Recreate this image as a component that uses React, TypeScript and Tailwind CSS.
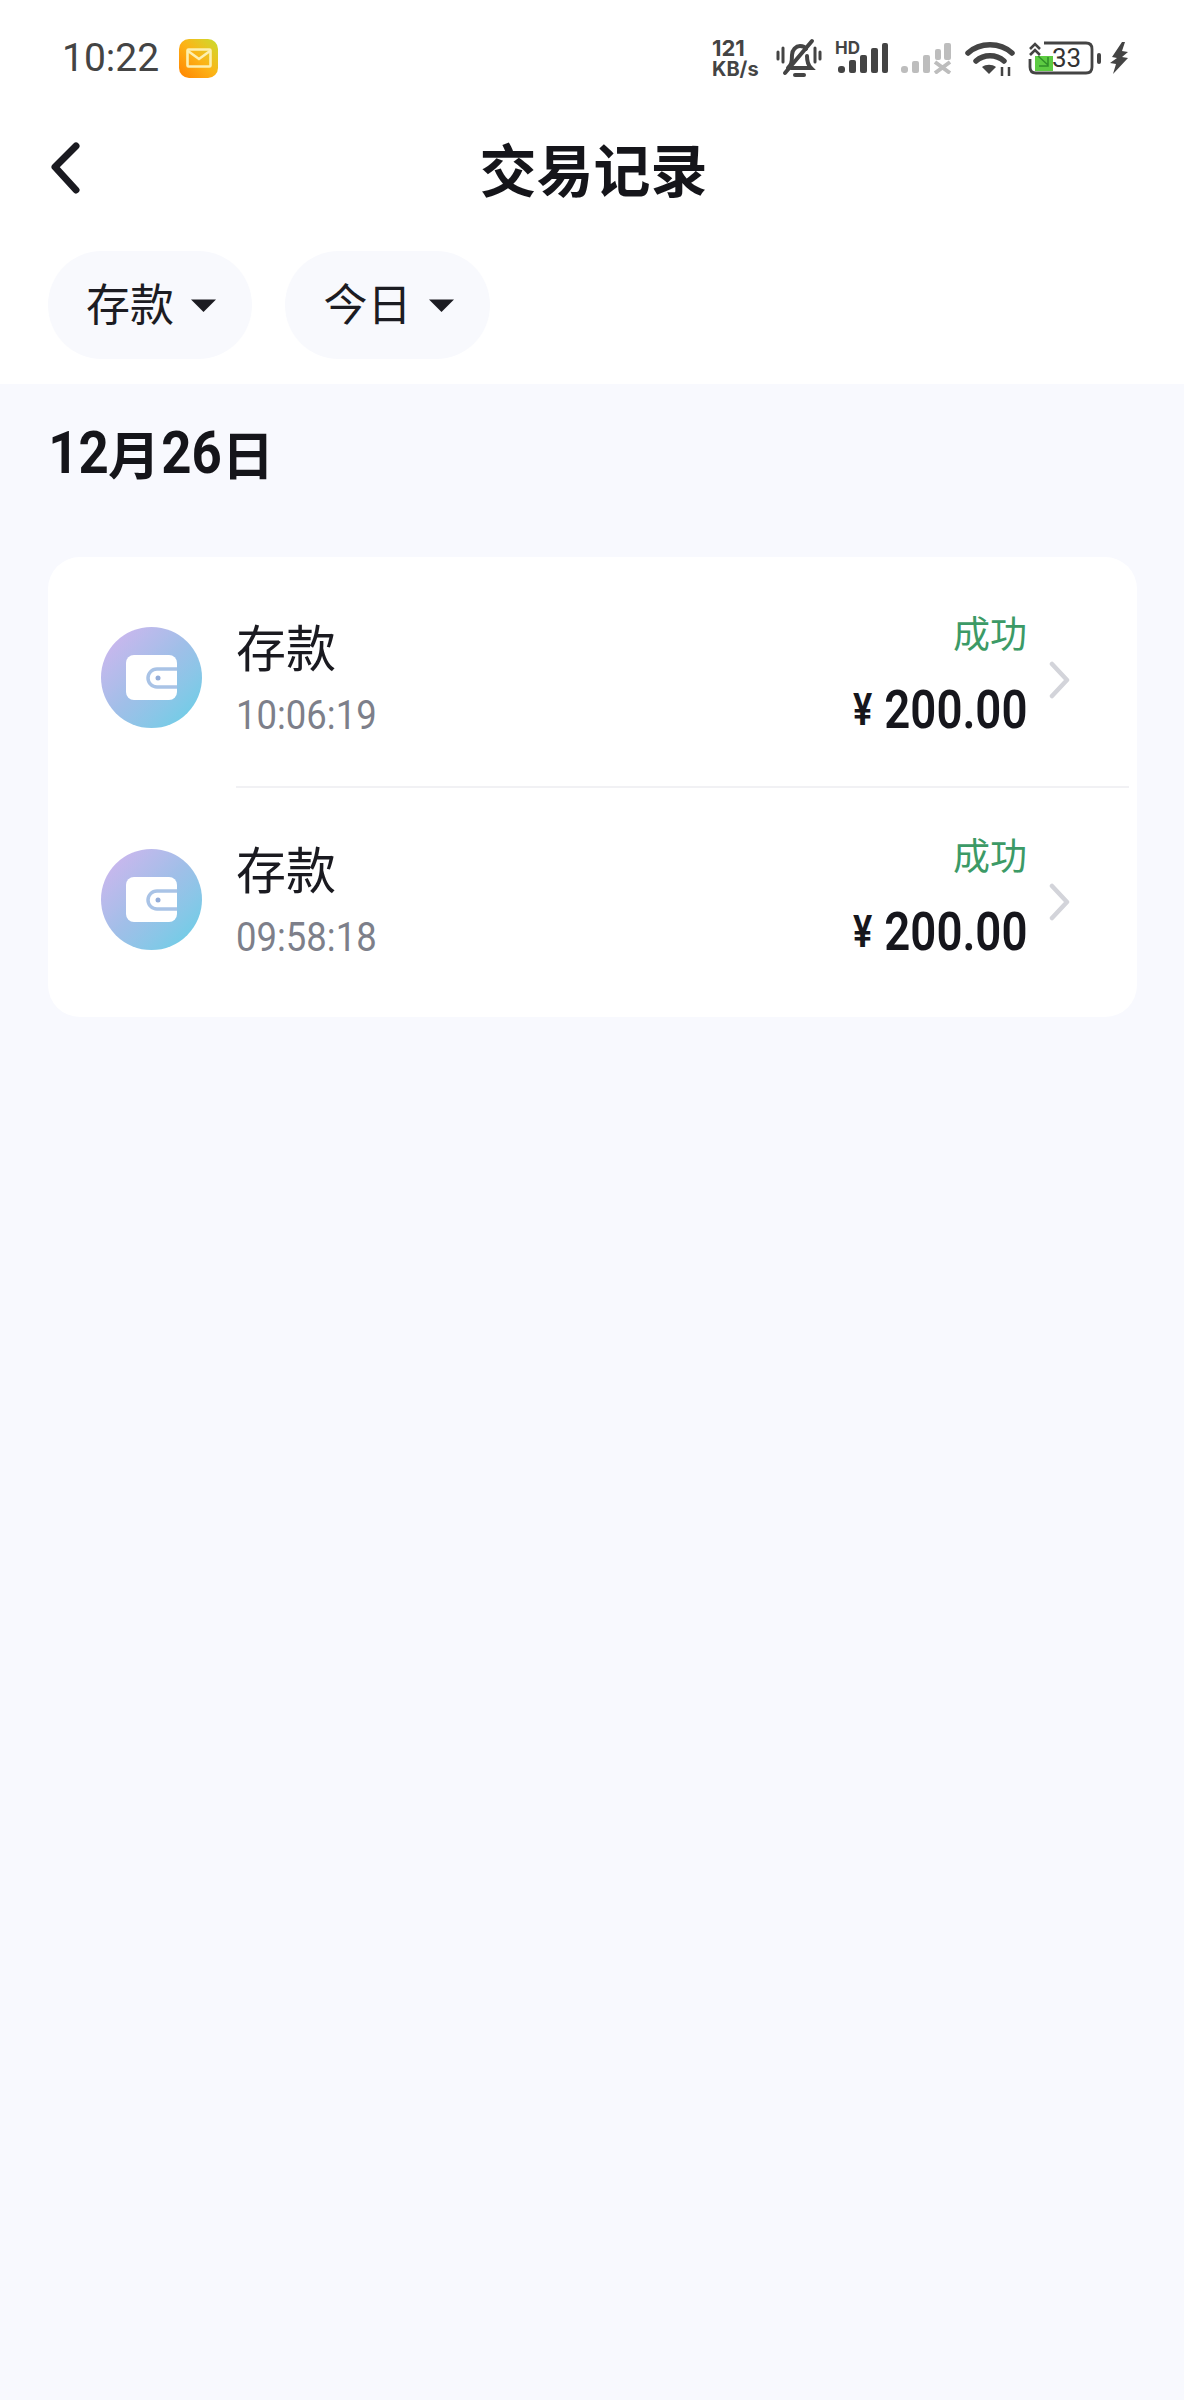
import React from 'react';

const CJK = "font-['Noto_Sans_CJK_SC','Noto_Sans',sans-serif]";

function MailIcon() {
  return (
    <div className="flex h-[39px] w-[39px] items-center justify-center rounded-[10px] bg-gradient-to-tr from-[#ff8200] via-[#fcb316] to-[#c6dc2e]">
      <svg width="26" height="20" viewBox="0 0 26 20" fill="none" stroke="#fdf0b0" strokeWidth="2.6">
        <rect x="1.500" y="1.500" width="23" height="17" rx="1" />
        <path d="M2 3l11 8 11-8" />
      </svg>
    </div>
  );
}

function StatusIcons() {
  return (
    <div className="flex items-center">
      <div className="mr-[12px] flex w-[52px] flex-col font-['Inter',sans-serif] font-bold text-[#444]">
        <span className="text-[22px] leading-[22px]">121</span>
        <span className="text-[20px] leading-[20px]">KB/s</span>
      </div>
      <svg className="mr-[13px]" width="46" height="40" viewBox="0 0 46 40" fill="none" stroke="#444" strokeWidth="4" strokeLinecap="round">
        <path d="M2 14v7M7 10v14M39 10v14M44 14v7" strokeWidth="3" />
        <path d="M12 30c3-3 4-5 4-13 0-5 4-9 8-9 3 0 5 1 6 3M31 18c0 6 1 9 4 12H15" />
        <path d="M19 37h9" />
        <path d="M9 35L36 3" />
      </svg>
      <div className="relative mr-[12px] h-[32px] w-[53px]">
        <span className="absolute left-0 top-[-3px] font-['Inter',sans-serif] text-[17px] font-bold leading-[18px] text-[#444]">HD</span>
        <svg width="53" height="32" viewBox="0 0 53 32" fill="#444">
          <rect x="3" y="24" width="7" height="7" rx="3" />
          <rect x="14" y="18" width="7" height="13" rx="2" />
          <rect x="25" y="13" width="7" height="18" rx="2" />
          <rect x="36" y="6" width="7" height="25" rx="2" />
          <rect x="47" y="1" width="6" height="30" rx="2" />
        </svg>
      </div>
      <svg className="mr-[13px]" width="52" height="32" viewBox="0 0 52 32" fill="#bdbdbd">
        <rect x="1" y="24" width="7" height="7" rx="3" />
        <rect x="12" y="19" width="7" height="12" rx="2" />
        <rect x="23" y="13" width="7" height="18" rx="2" />
        <rect x="35" y="7" width="6" height="11" rx="2" />
        <rect x="44" y="1" width="7" height="17" rx="2" />
        <path d="M35 20l15 11M50 20L35 31" stroke="#bdbdbd" strokeWidth="4" fill="none" />
      </svg>
      <svg className="mr-[13px]" width="50" height="36" viewBox="0 0 50 36" fill="none" stroke="#444" strokeWidth="5.500">
        <path d="M3 13c12-11 32-11 44 0" strokeLinecap="round" />
        <path d="M11 21c8-7 20-7 28 0" strokeLinecap="round" />
        <path d="M17 27c4-3 10-3 14 0l-7 7z" fill="#444" stroke="none" />
        <path d="M37 27v9M44 27v9" strokeWidth="2.500" />
      </svg>
      <div className="relative mr-[8px] h-[34px] w-[74px]">
        <svg width="74" height="34" viewBox="0 0 74 34" fill="none">
          <path d="M2 8l5-5 5 5M2 14l5-5 5 5" stroke="#444" strokeWidth="2.600" />
          <path d="M2 18v8c0 4 2 6 6 6h50c4 0 6-2 6-6V8c0-4-2-6-6-6H16" stroke="#444" strokeWidth="2.800" />
          <path d="M7 15h18v15H7z" fill="#5dcb42" />
          <path d="M10 15l10 9M20 16v9h-9" stroke="#2f8f28" strokeWidth="1.500" />
          <rect x="69" y="12" width="4" height="11" rx="2" fill="#444" />
        </svg>
        <span className="absolute left-[24px] top-[1px] font-['Roboto',sans-serif] text-[26px] leading-[32px] text-[#333]">33</span>
      </div>
      <svg width="18" height="32" viewBox="0 0 18 32" fill="#444">
        <path d="M12 0L2 15l5 1-7 5 6 1-3 10 15-16-6-1 6-5-6-1 3-9z" />
      </svg>
    </div>
  );
}

function Caret() {
  return (
    <svg width="25" height="13" viewBox="0 0 25 13" fill="#1c1c22">
      <path d="M0 0.500h25L12.500 13z" />
    </svg>
  );
}

function WalletBadge() {
  return (
    <div className="flex h-[101px] w-[101px] shrink-0 items-center justify-center rounded-full bg-gradient-to-br from-[#d4b4ef] via-[#9fbfe8] to-[#5fd0e6]">
      <svg width="51" height="45" viewBox="0 0 51 45">
        <rect width="51" height="45" rx="8" fill="#fff" />
        <path d="M51 14H31a8.500 8.500 0 0 0 0 18h20" fill="#fff" stroke="#a9c3e6" strokeWidth="3.500" />
        <circle cx="32" cy="23" r="2.500" fill="#93acd8" />
      </svg>
    </div>
  );
}

function Row({ time, last }: { time: string; last?: boolean }) {
  return (
    <div className={`flex h-[231px] ${last ? '-mt-[9px]' : ''}`}>
      <div className="pl-[53px] pt-[70px]">
        <WalletBadge />
      </div>
      <div className={`ml-[34px] mr-[8px] flex flex-1 ${last ? '' : 'border-b-2 border-[#f1f1f4]'}`}>
        <div className="pt-[58px]">
          <div className={`${CJK} text-[50px] leading-[60px] text-[#1a1a20]`}>存款</div>
          <div className="mt-[18px] w-[138px] origin-left scale-x-[0.89] whitespace-nowrap font-['Roboto',sans-serif] text-[41px] font-normal leading-[44px] text-[#7d7f8a]">{time}</div>
        </div>
        <div className="ml-auto flex flex-col items-end pt-[50px]">
          <div className={`${CJK} text-[37px] leading-[50px] text-[#3c9a66]`}>成功</div>
          <div className="mt-[23px] flex items-center font-['Roboto',sans-serif] font-semibold leading-[60px] text-[#16161c]">
            <span className="flex w-[32px] justify-start">
              <span className="origin-left scale-x-[0.82] text-[44px]">¥</span>
            </span>
            <span className="flex w-[142px] justify-end">
              <span className="origin-right scale-x-[0.86] whitespace-nowrap text-[53px]">200.00</span>
            </span>
          </div>
        </div>
        <div className="ml-[22px] mr-[59px] pt-[104px]">
          <svg width="21" height="38" viewBox="0 0 21 38" fill="none" stroke="#d3d4da" strokeWidth="4.500" strokeLinecap="round" strokeLinejoin="round">
            <path d="M3 3l15 16L3 35" />
          </svg>
        </div>
      </div>
    </div>
  );
}

export default function App() {
  return (
    <div className="flex min-h-[2400px] w-[1184px] flex-col bg-white">
      <div className="flex h-[116px] items-center justify-between pl-[62px] pr-[56px]">
        <div className="flex items-center">
          <span className="font-['Roboto',sans-serif] text-[39px] leading-none text-[#444]">10:22</span>
          <div className="ml-[20px]">
            <MailIcon />
          </div>
        </div>
        <StatusIcons />
      </div>

      <div className="relative flex h-[115px] items-center justify-center pb-[14px] pl-[3px]">
        <svg className="absolute left-[48px] top-[24px]" width="34" height="54" viewBox="0 0 34 54" fill="none" stroke="#1a1a20" strokeWidth="7" strokeLinecap="round" strokeLinejoin="round">
          <path d="M28 6L7 27l21 23" />
        </svg>
        <h1 className={`${CJK} text-[57px] font-bold leading-[70px] text-[#15151a]`}>交易记录</h1>
      </div>

      <div className="flex gap-[33px] px-[48px] pt-[20px]">
        <div className="flex h-[108px] w-[204px] items-center justify-center gap-[17px] rounded-full bg-[#f8f9fd] pl-[2px]">
          <span className={`${CJK} -mt-[6px] text-[44px] leading-none text-[#1c1c22]`}>存款</span>
          <Caret />
        </div>
        <div className="flex h-[108px] w-[205px] items-center justify-center gap-[17px] rounded-full bg-[#f8f9fd] pl-[2px]">
          <span className={`${CJK} -mt-[6px] text-[44px] leading-none text-[#1c1c22]`}>今日</span>
          <Caret />
        </div>
      </div>

      <div className="mt-[25px] flex-1 bg-[#f8f9fe] px-[48px] pt-[34px]">
        <div className="flex h-[70px] items-center text-[#15151a]">
          <span className="flex w-[60px] justify-center">
            <span className="scale-x-[0.88] font-['Roboto',sans-serif] text-[60px] font-bold leading-none">12</span>
          </span>
          <span className={`${CJK} text-[52px] font-bold leading-none`}>月</span>
          <span className="flex w-[62px] justify-center">
            <span className="scale-x-[0.88] font-['Roboto',sans-serif] text-[60px] font-bold leading-none">26</span>
          </span>
          <span className={`${CJK} text-[52px] font-bold leading-none`}>日</span>
        </div>
        <div className="mt-[69px] h-[460px] w-[1089px] overflow-hidden rounded-[32px] bg-white">
          <Row time="10:06:19" />
          <Row time="09:58:18" last />
        </div>
      </div>
    </div>
  );
}
